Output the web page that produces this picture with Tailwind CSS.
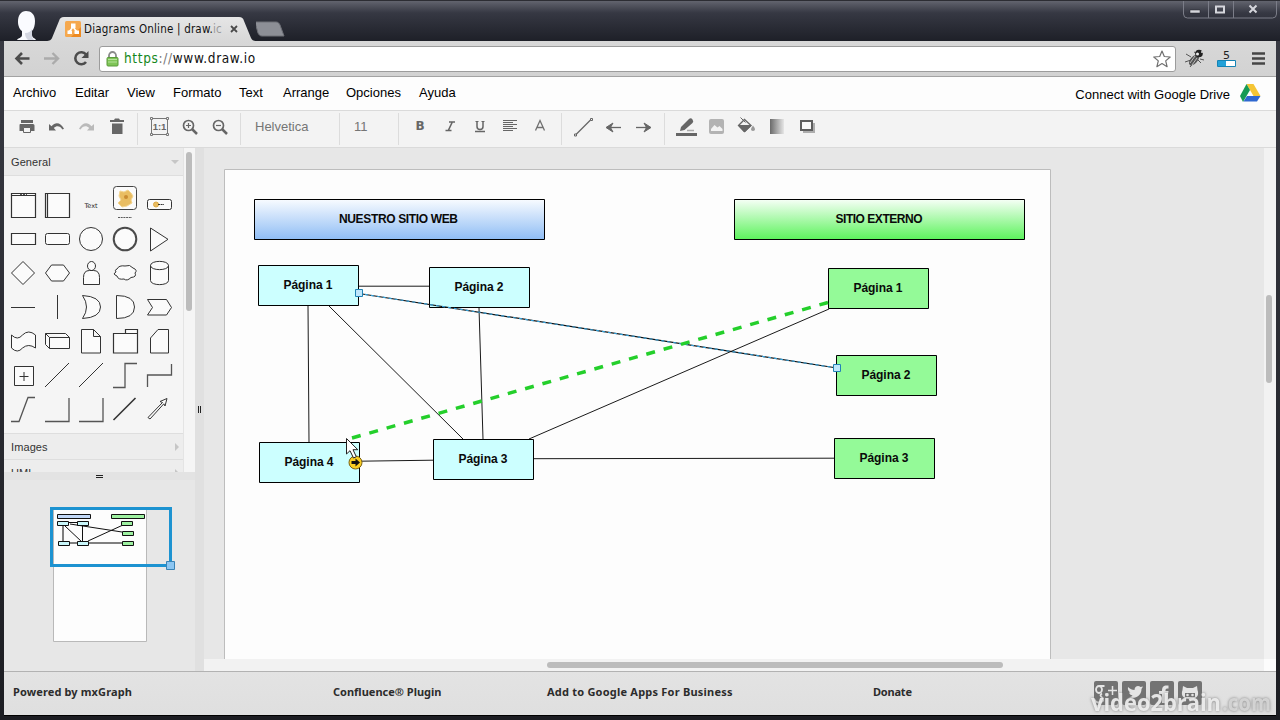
<!DOCTYPE html>
<html lang="es">
<head>
<meta charset="utf-8">
<title>Diagrams Online | draw.io</title>
<script src="https://cdn.jsdelivr.net/npm/@tailwindcss/browser@4"></script>
</head>
<body class="w-[1280px] h-[720px] overflow-hidden bg-[#24252b] font-['Liberation_Sans',sans-serif] text-black">
<div class="flex flex-col w-[1280px] h-[720px] bg-linear-to-b from-[#3a3c45] to-[#1c1d22]">

  <!-- Window title bar with tabs -->
  <header class="relative h-[41px] shrink-0 flex items-start bg-linear-to-b from-[#62646e] via-[#363843] via-30% to-[#1e2028] border-t border-[#2c2d33]">
    <svg class="shrink-0" width="50" height="40" viewBox="0 1 50 40"><path d="M17 40c1-2 5-2 5-5v-4c-2-1-4-5-4-9 0-7 3-11 8-11s9 3 9 10c0 4-1 8-3 10v4c0 3 3 3 4 5z" fill="#fafbff"/><path d="M25 33c4 0 6-2 7-4v6c0 2 1 4 2 5h-6c-2-2-3-4-3-7z" fill="#d4d7e2"/></svg>
    <div class="relative w-[206px] h-10 shrink-0">
      <svg class="absolute inset-0 overflow-visible" width="206" height="40" viewBox="50 1 206 40"><defs><linearGradient id="tab" x2="0" y2="1"><stop stop-color="#e6e6e6"/><stop offset="1" stop-color="#d8d8d8"/></linearGradient></defs><path d="M46 41c4 0 5-1 6-3l7-17c1-3 2-4 5-4h175c3 0 4 1 5 4l7 17c1 2 2 3 5 3z" fill="url(#tab)"/></svg>
      <div class="relative flex items-center h-[24px] mt-4 pl-[15px]">
        <svg width="16" height="16" viewBox="0 0 16 16"><rect width="16" height="16" rx="1.500" fill="#f5a84e"/><path d="M6 16 16 6v10z" fill="#ee8a20"/><path d="M8 4v3M8 6 4 11M8 6l4 5" stroke="#fff" stroke-width="1.500"/><path d="M6 2.500h4.500V7H6zM2.500 9.500H7V13H2.500zM9.500 9.500H14V13H9.500z" fill="#fff"/></svg>
        <span class="ml-[3px] w-[138px] overflow-hidden whitespace-nowrap font-['DejaVu_Sans_Condensed','DejaVu_Sans',sans-serif] [font-stretch:condensed] text-[11.500px] leading-4 tracking-[.2px] text-[#111]">Diagrams Online | draw.<span class="text-[#999]">ic</span></span>
        <svg class="ml-[7px]" width="10" height="10" viewBox="0 0 10 10"><path d="m2 2 6 6M8 2 2 8" stroke="#4a4a4a" stroke-width="1.800"/></svg>
      </div>
    </div>
    <svg class="shrink-0" width="32" height="40" viewBox="256 1 32 40"><path d="M255 22h21c2 0 3 1 4 3l4 11h-22c-2 0-3-1-4-3z" fill="#8d8f96" stroke="#6e7077"/></svg>
    <svg class="ml-auto mr-[3px] shrink-0" width="95" height="40" viewBox="1182 1 95 40"><path d="M1183.500 1v13q0 4 4 4h85q4 0 4-4V1M1208.500 1v17M1233.500 1v17" fill="none" stroke="#7b7d88"/><path d="M1190 10h10v3h-10z" fill="#d5d6dc" stroke="#25262d" stroke-width=".5"/><path d="M1216 6.500h8v6h-8z" fill="none" stroke="#d5d6dc" stroke-width="2"/><path d="m1249.500 5.500 7 7m0-7-7 7" stroke="#d5d6dc" stroke-width="2"/></svg>
  </header>

  <div class="flex flex-col mx-1 h-[675px] bg-white border-b border-black">
    <!-- Browser toolbar -->
    <div class="flex items-center h-9 shrink-0 bg-linear-to-b from-[#d8d8d8] to-[#d2d2d2] border-b border-[#a3a3a3]">
      <svg class="shrink-0" width="95" height="35" viewBox="4 41 95 35" fill="none"><path d="M29.500 58.500H17M22 53l-5.500 5.500L22 64" stroke="#4c4c4c" stroke-width="2.600"/><path d="M44 58.500h13M52.500 53l5.500 5.500-5.500 5.500" stroke="#ababab" stroke-width="2.400"/><path d="M86 62a6 6 0 1 1 0-7.500" stroke="#4c4c4c" stroke-width="2.600"/><path d="M88.500 51v7H81.500z" fill="#4c4c4c"/></svg>
      <div class="flex items-center w-[1077px] h-[26px] bg-white border border-[#9c9c9c] rounded-[3px] pl-[6px] pr-[4px]">
        <svg width="13" height="18" viewBox="0 0 13 18"><path d="M3 9V5.500a3.500 3.500 0 0 1 7 0V9" fill="none" stroke="#8b8b8b" stroke-width="1.800"/><rect x="1" y="7.500" width="11" height="8.500" rx="1" fill="#7fc557" stroke="#5b9a3b"/><path d="M2 9.500h9M2 12h9" stroke="#b5e29a"/></svg>
        <span class="ml-[5px] font-['DejaVu_Sans_Condensed','DejaVu_Sans',sans-serif] [font-stretch:condensed] text-[13.500px] tracking-[.65px] text-[#111] whitespace-nowrap"><span class="text-[#16881c]">https</span><span class="text-[#777]">://</span>www.draw.io</span>
        <svg class="ml-auto" width="18" height="18" viewBox="0 0 18 18"><path d="m9 1 2.300 5.500 5.900.5-4.500 3.900 1.400 5.800L9 13.600l-5.100 3.100 1.400-5.800L.8 7l5.900-.5z" fill="#fff" stroke="#707070" stroke-width="1.200" stroke-linejoin="round"/></svg>
      </div>
      <svg class="shrink-0" width="98" height="35" viewBox="1176 41 98 35"><path d="M1186 54l5 3m-6 5 6-2m-1 7 4-5m4-8-4-2m10 8-4-1m1 4-3-3" stroke="#555" fill="none"/><ellipse cx="1194" cy="60" rx="6.500" ry="3.500" transform="rotate(-48 1194 60)" fill="#555"/><path d="m1190 63 5-7m-3 9 5-7" stroke="#bbb"/><circle cx="1199" cy="53.500" r="3.800" fill="#222"/><circle cx="1197.500" cy="54" r="1.500" fill="#eee"/><circle cx="1202" cy="52" r="1" fill="#ddd"/><text x="1226.500" y="58.500" font-size="11" text-anchor="middle" font-family="DejaVu Sans" fill="#222">5</text><path d="M1217.500 60.500h18v6h-18z" fill="#fff" stroke="#1583b4"/><path d="M1218 61h8v5h-8z" fill="#22a1d8"/><path d="M1252 53.500h13M1252 58.500h13M1252 63.500h13" stroke="#454545" stroke-width="2.600"/></svg>
    </div>

    <!-- Application menu -->
    <nav class="flex items-center h-[33px] shrink-0 bg-[#fdfdfd] pl-[9px] pb-[2px] text-[13px] leading-4 whitespace-nowrap">
      <span class="w-[62px]">Archivo</span><span class="w-[52px]">Editar</span><span class="w-[46px]">View</span><span class="w-[66px]">Formato</span><span class="w-11">Text</span><span class="w-[63px]">Arrange</span><span class="w-[73px]">Opciones</span><span>Ayuda</span>
      <span class="ml-auto mt-1">Connect with Google Drive</span>
      <svg class="ml-[9px] mr-[15px] mt-px" width="22" height="20" viewBox="1239 84 22 20"><path d="M1246.500 85h7l7 12h-7z" fill="#f5c535"/><path d="m1246.500 85 3.500 6-7 12-3-6z" fill="#169a55"/><path d="m1247 97h13.500l-3.500 5.500h-13.500z" fill="#2f68d0"/></svg>
    </nav>

    <!-- Icon toolbar -->
    <div class="flex items-center h-[38px] shrink-0 bg-[#f3f3f3] border-y border-[#dadada] pl-2 text-[13px] text-[#757575]">
      <svg width="30" height="36" viewBox="12 111 30 36"><path d="M21 120h12v3H21zM20 124h13q1.500 0 1.500 1.500V131H31v-3h-8v3h-3.500v-5.500Q19.500 124 20 124z" fill="#666"/><path d="M23.500 127.500h7v5h-7z" fill="#f3f3f3" stroke="#666"/></svg>
      <svg width="30" height="36" viewBox="42 111 30 36"><path d="M49 124v6.500h7l-2.200-2.500c3-3 6.500-2 8.700 1.500l1.500-.8c-3-6-8.500-7.500-12.500-2.500z" fill="#666"/></svg>
      <svg width="30" height="36" viewBox="72 111 30 36"><path d="M94 124v6.500h-7l2.200-2.500c-3-3-6.500-2-8.700 1.500l-1.500-.8c3-6 8.500-7.500 12.500-2.500z" fill="#bababa"/></svg>
      <svg width="30" height="36" viewBox="102 111 30 36"><path d="M110 120h4l1-1.500h4l1 1.500h4v2h-14zM112 123.500h10.500V134H112z" fill="#666"/></svg>
      <i class="w-px h-8 bg-[#dcdcdc] ml-[5px] mr-[6px]"></i>
      <svg width="31" height="36" viewBox="144 111 31 36"><path d="M151.500 118.500h16v16h-16z" fill="none" stroke="#777"/><path d="M150.500 117.500h2v2h-2zM166.500 117.500h2v2h-2zM150.500 133.500h2v2h-2zM166.500 133.500h2v2h-2z" fill="#f3f3f3" stroke="#777"/><text x="159.500" y="130" font-size="9.500" font-weight="700" text-anchor="middle" font-family="Liberation Sans" fill="#666">1:1</text></svg>
      <svg width="30" height="36" viewBox="175 111 30 36" fill="none" stroke="#666"><circle cx="188.500" cy="125.500" r="5" stroke-width="1.700"/><path d="m192 129 5 5" stroke-width="2.500"/><path d="M186 125.500h5M188.500 123v5" stroke-width="1.200"/></svg>
      <svg width="30" height="36" viewBox="205 111 30 36" fill="none" stroke="#666"><circle cx="218.500" cy="125.500" r="5" stroke-width="1.700"/><path d="m222 129 5 5" stroke-width="2.500"/><path d="M216 125.500h5" stroke-width="1.200"/></svg>
      <i class="w-px h-8 bg-[#dcdcdc] ml-[5px] mr-[14px]"></i>
      <span class="w-[84px] -mt-[4px]">Helvetica</span>
      <i class="w-px h-8 bg-[#dcdcdc] mr-[14px]"></i>
      <span class="w-11 -mt-[4px]">11</span>
      <i class="w-px h-8 bg-[#dcdcdc] mr-[6px]"></i>
      <svg width="30" height="36" viewBox="405 111 30 36"><text x="420" y="130" font-size="12" font-weight="700" text-anchor="middle" font-family="DejaVu Sans" fill="#666">B</text></svg>
      <svg width="30" height="36" viewBox="435 111 30 36"><path d="M449 122h6M445.500 130.500h6M452.300 122l-4 8.500" stroke="#666" stroke-width="1.600"/></svg>
      <svg width="30" height="36" viewBox="465 111 30 36"><path d="M477 121v5.500c0 4 6 4 6 0V121M475 131.500h10" fill="none" stroke="#666" stroke-width="1.500"/><path d="M475.500 121.500h3M481.500 121.500h3" stroke="#666"/></svg>
      <svg width="30" height="36" viewBox="495 111 30 36"><path d="M503 120.500h14M503 122.500h10M503 124.500h14M503 126.500h10M503 128.500h14M503 130.500h10" stroke="#666"/></svg>
      <svg width="30" height="36" viewBox="525 111 30 36"><path d="m535.500 130.500 4.500-10 4.500 10M537 127.500h6" fill="none" stroke="#707070" stroke-width="1.300"/></svg>
      <i class="w-px h-8 bg-[#dcdcdc] ml-[6px] mr-[6px]"></i>
      <svg width="30" height="36" viewBox="568 111 30 36"><path d="m576 134.500 15-15" stroke="#666" stroke-width="1.200"/><path d="M574.500 134h2v2h-2zM590.500 118.500h2v2h-2z" fill="#f3f3f3" stroke="#666"/></svg>
      <svg width="30" height="36" viewBox="598 111 30 36"><path d="M621 127.500h-14" stroke="#666" stroke-width="1.300"/><path d="m613 123-7 4.500 7 4.500-2.500-4.500z" fill="#666" stroke="#666"/></svg>
      <svg width="30" height="36" viewBox="628 111 30 36"><path d="M636 127.500h14" stroke="#666" stroke-width="1.300"/><path d="m644 123 7 4.500-7 4.500 2.500-4.500z" fill="#666" stroke="#666"/></svg>
      <i class="w-px h-8 bg-[#dcdcdc] ml-[6px] mr-[6px]"></i>
      <svg width="30" height="36" viewBox="671 111 30 36"><path d="M676 133h21v3h-21zM680 131l1-4 8-8q2-1.500 3.500.5t0 3.500l-8 7z" fill="#666"/><path d="M687 130.500h7" stroke="#aaa" stroke-width="1.500"/></svg>
      <svg width="30" height="36" viewBox="701 111 30 36"><rect x="709" y="119" width="15" height="15" rx="2" fill="#b3b3b3"/><path d="m711 131v-2l3.500-4 3 2.500 2-1.500 3 3v2z" fill="#f3f3f3"/></svg>
      <svg width="30" height="36" viewBox="731 111 30 36"><path d="m738.500 125.500 6-6 6.500 6-6.500 6z" fill="#f3f3f3" stroke="#666" stroke-width="1.300"/><path d="M738.500 125.500h12.500l-6.500 6.500zM740.500 117.500l5 5" fill="#666" stroke="#666"/><path d="M753 125.500q4 5 0 5.500-4-.5 0-5.500z" fill="#999"/></svg>
      <svg width="30" height="36" viewBox="761 111 30 36"><defs><linearGradient id="gr"><stop stop-color="#6a6a6a"/><stop offset="1" stop-color="#e6e6e6"/></linearGradient></defs><path d="M770 119h14v15h-14z" fill="url(#gr)"/></svg>
      <svg width="30" height="36" viewBox="791 111 30 36"><path d="M803 123h12v10h-12z" fill="#adadad"/><path d="M801 121h11v9h-11z" fill="#f8f8f8" stroke="#5e5e5e" stroke-width="2"/></svg>
    </div>

    <main class="flex h-[523px] shrink-0 bg-[#e7e7e7]">
      <!-- Shape palette -->
      <aside class="flex flex-col w-[191px] shrink-0">
        <div class="flex h-[324px] overflow-hidden bg-[#f5f5f5]">
          <div class="w-[180px] border-r border-[#e4e4e4] text-[11px] leading-4 text-[#333]">
            <div class="flex items-center justify-between h-7 pl-[7px] pr-[4px] bg-[#ebebeb] border-b border-[#dedede] tracking-[.1px]">General<i class="border-x-4 border-x-transparent border-t-4 border-t-[#c6c6c6]"></i></div>
            <div class="grid grid-cols-[repeat(5,34px)] auto-rows-[34px] pl-[2px] pt-3 h-[257px] *:w-[34px] *:h-[34px] *:fill-[#fbfbfb] *:stroke-[#333]">
              <svg viewBox="0 0 34 34"><path d="M5.500 5.500h24v24h-24zM5.500 7.500h24" stroke-width="1.200"/><path d="M14 6.700h7" stroke-dasharray="2 1"/></svg>
              <svg viewBox="0 0 34 34"><path d="M5.500 5.500h24v24h-24zM7.500 5.500v24" stroke-width="1.200"/></svg>
              <svg viewBox="0 0 34 34"><text x="17" y="19.500" text-anchor="middle" font-size="6.500" stroke="none" fill="#222" font-family="DejaVu Sans">Text</text></svg>
              <svg viewBox="0 0 34 34" class="overflow-visible"><rect x="5.500" y="-1.500" width="23" height="23" rx="3" stroke="#444"/><path d="m12 3 4 1 4-2 3 3 2 3-2 4 1 3-5 3-5 1-4-4 3-3-2-4z" fill="#e9bd62" stroke="#f3d591"/><circle cx="18" cy="9" r="2" fill="#c98c32" stroke="none"/><path d="M10 29.500h14" stroke-dasharray="2 .7" stroke-width=".8"/></svg>
              <svg viewBox="0 0 34 34"><rect x="5.500" y="11.500" width="24" height="10" rx="2"/><circle cx="14" cy="16.500" r="2.500" fill="#e9bd62" stroke="#ddaa45"/><path d="M16 16.500h6" stroke-dasharray="2 .6"/></svg>

              <svg viewBox="0 0 34 34"><path d="M5.500 11.500h24v11h-24z" stroke-width="1.200"/></svg>
              <svg viewBox="0 0 34 34"><rect x="5.500" y="11.500" width="24" height="11" rx="2"/></svg>
              <svg viewBox="0 0 34 34"><circle cx="17" cy="17" r="11.500"/></svg>
              <svg viewBox="0 0 34 34"><circle cx="17" cy="17" r="11.300" stroke="#4a4a4a" stroke-width="2"/></svg>
              <svg viewBox="0 0 34 34"><path d="M8.500 6v23L26 17.300z"/></svg>

              <svg viewBox="0 0 34 34"><path d="M17 5.500 28.500 17 17 28.500 5.500 17z"/></svg>
              <svg viewBox="0 0 34 34"><path d="M5.500 17l6-8h12l6 8-6 8h-12z"/></svg>
              <svg viewBox="0 0 34 34"><ellipse cx="17.500" cy="10" rx="4" ry="4.500"/><path d="M9.500 28.500v-7q0-7 6-7h4q6 0 6 7v7z"/></svg>
              <svg viewBox="0 0 34 34"><path d="M9 13q2-4 8-3 5-2 8 2 5 2 2 5 2 4-4 4.500-4 4-7 1.500-6 1-7-3-5-2-1-4-2-2 1-3z"/></svg>
              <svg viewBox="0 0 34 34"><path d="M8.500 9.500v15c0 5.500 18 5.500 18 0v-15c0-5.500-18-5.500-18 0zc0 5.500 18 5.500 18 0"/></svg>

              <svg viewBox="0 0 34 34"><path d="M5 17.500h24"/></svg>
              <svg viewBox="0 0 34 34"><path d="M17.500 5v24"/></svg>
              <svg viewBox="0 0 34 34"><path d="M8.500 5.500q18 1 18 11.500t-18 11.500q8-11.500 0-23z"/></svg>
              <svg viewBox="0 0 34 34"><path d="M8.500 5.500q18 0 18 11.500t-18 11.500z"/></svg>
              <svg viewBox="0 0 34 34"><path d="M5.500 9.500h19l5 8-5 7.500h-19l5-7.500z"/></svg>

              <svg viewBox="0 0 34 34"><path d="M5.500 11q6 6 11 0 6-6 13 0v13q-7-5-13 0-5 6-11 0z"/></svg>
              <svg viewBox="0 0 34 34"><path d="M5.500 9.500h20l4 4v11h-20l-4-4zM5.500 9.500l4 4h20M9.500 13.500v11"/></svg>
              <svg viewBox="0 0 34 34"><path d="M7.500 5.500h12l7 7v16.500h-19zM19.500 5.500v7h7"/></svg>
              <svg viewBox="0 0 34 34"><path d="M5.500 9.500h12v-4h12v23.500h-24zM17.500 9.500h12" stroke-width="1.200"/></svg>
              <svg viewBox="0 0 34 34"><path d="M16 5.500h10.500V29h-18V14z"/></svg>

              <svg viewBox="0 0 34 34"><path d="M8.500 8.500h19v19h-19zM18 14v9M13.500 18.500h9"/></svg>
              <svg viewBox="0 0 34 34"><path d="m5 29 24-24"/></svg>
              <svg viewBox="0 0 34 34"><path d="m5 29 24-24"/></svg>
              <svg viewBox="0 0 34 34" class="fill-none!"><path d="M5 29.500h12V5.500h12" stroke="#555" stroke-width="1.300"/></svg>
              <svg viewBox="0 0 34 34" class="fill-none!"><path d="M5.500 29V17h24V6" stroke="#555" stroke-width="1.300"/></svg>

              <svg viewBox="0 0 34 34" class="fill-none!"><path d="M5 29.500h8L22 5.500h7" stroke="#555" stroke-width="1.300"/></svg>
              <svg viewBox="0 0 34 34" class="fill-none!"><path d="M5 29.500h24V6" stroke="#555" stroke-width="1.300"/></svg>
              <svg viewBox="0 0 34 34" class="fill-none!"><path d="M5 29.500h24V6" stroke="#555" stroke-width="1.300"/></svg>
              <svg viewBox="0 0 34 34"><path d="M5.500 28 27.500 6" stroke-width="1.600"/></svg>
              <svg viewBox="0 0 34 34"><path d="m6 25.500 14.500-15-2.500-1 7-3-2 7.500-1.200-2.200L8 27z"/></svg>
            </div>
            <div class="flex items-center justify-between h-[27px] pl-[7px] pr-[4px] bg-[#ededed] border-y border-[#dedede] tracking-[.1px]">Images<i class="border-y-4 border-y-transparent border-l-4 border-l-[#c6c6c6]"></i></div>
            <div class="flex items-center justify-between h-[26px] pl-[7px] pr-[4px] bg-[#ededed] tracking-[.1px]">UML<i class="border-y-4 border-y-transparent border-l-4 border-l-[#c6c6c6]"></i></div>
          </div>
          <div class="grow pl-[2px] pt-1"><div class="w-[6px] h-[159px] rounded-full bg-[#bcbcbc]"></div></div>
        </div>
        <div class="flex flex-col items-center justify-center gap-px h-2 bg-[#e3e3e3]"><i class="w-[7px] h-px bg-[#222]"></i><i class="w-[7px] h-px bg-[#222]"></i></div>
        <!-- Outline -->
        <svg width="191" height="191" viewBox="4 480 191 191"><path d="M53.500 509.500h93v132h-93z" fill="#fdfdfd" stroke="#b9b9b9"/><g stroke="#111" fill="none"><path d="M68 522.500h10M65 526l17 16M82.500 526v16M70 524l52 8M88 541l35-16"/><path d="M63 526v16M69 543h14M88 543h35" stroke-width="1.500" stroke="#555"/></g><g fill="#c9f7fb" stroke="#111"><path d="M57.500 514.500h33v4h-33z" fill="#c3d9f8"/><path d="M57.500 521.500h11v4h-11zM77.500 521.500h11v4h-11zM58.500 541.500h11v4h-11zM77.500 541.500h11v4h-11z"/></g><path d="M111.500 514.500h33v4h-33zM121.500 521.500h11v4h-11zM122.500 531.500h11v4h-11zM122.500 541.500h11v4h-11z" fill="#9df0a0" stroke="#111"/><path d="M51.500 508.500h119v57h-119z" fill="none" stroke="#1d93d1" stroke-width="3"/><path d="M166.500 561.500h8v8h-8z" fill="#8cc6f2" stroke="#3a83b5"/></svg>
      </aside>

      <div class="flex items-center justify-center gap-px w-[9px] h-full shrink-0 bg-[#e0e0e0]"><i class="w-px h-[7px] bg-[#222]"></i><i class="w-px h-[7px] bg-[#222]"></i></div>

      <!-- Diagram canvas -->
      <section class="grow flex flex-col">
        <div class="flex h-[511px]">
          <svg width="1060" height="511" viewBox="204 148 1060 511" font-family="Liberation Sans, sans-serif" font-size="12" font-weight="700" text-anchor="middle">
            <defs>
              <linearGradient id="bl" x2="0" y2="1"><stop stop-color="#f8fbff"/><stop offset="1" stop-color="#8fbdf5"/></linearGradient>
              <linearGradient id="gn" x2="0" y2="1"><stop stop-color="#f6fff6"/><stop offset="1" stop-color="#5cf35c"/></linearGradient>
            </defs>
            <path d="M224.500 169.500h826V662h-826z" fill="#fdfdfd" stroke="#bdbdbd"/>
            <g stroke="#1a1a1a" fill="none">
              <path d="M359 286.200h70M308 306l1 136M329 306l134 133M479 308l4 131M360 461.200l73-1M534 458.700l300-.5M529 439l300-130"/>
            </g>
            <g stroke="#000">
              <path d="M254.500 199.500h290v40h-290z" fill="url(#bl)"/>
              <path d="M734.500 199.500h290v40h-290z" fill="url(#gn)"/>
              <path d="M258.500 265.500h100v40h-100zM429.500 267.500h100v40h-100zM259.500 442.500h100v40h-100zM433.500 439.500h100v40h-100z" fill="#ccffff"/>
              <path d="M828.500 268.500h100v40h-100zM836.500 355.500h100v40h-100zM834.500 438.500h100v40h-100z" fill="#94fa98"/>
            </g>
            <path d="M359 293.500 837 368" stroke="#111" stroke-width="1.200"/>
            <path d="M359 293.500 837 368" stroke="#35a0d8" stroke-width="1.200" stroke-dasharray="3 3"/>
            <path d="M352 438 828 302.500" stroke="#24cf2b" stroke-width="3.500" stroke-dasharray="9 9"/>
            <path d="M355.500 289.500h7v7h-7zM833.500 364.500h7v7h-7z" fill="#bfe6fb" stroke="#2183b5"/>
            <g fill="#0a0a0a">
              <text x="398.500" y="222.500" textLength="119">NUESTRO SITIO WEB</text>
              <text x="879" y="222.500" textLength="87">SITIO EXTERNO</text>
              <text x="308" y="289" textLength="49">Página 1</text>
              <text x="479" y="291" textLength="49">Página 2</text>
              <text x="309" y="466" textLength="49">Página 4</text>
              <text x="483" y="463" textLength="49">Página 3</text>
              <text x="878" y="292" textLength="49">Página 1</text>
              <text x="886" y="379" textLength="49">Página 2</text>
              <text x="884" y="462" textLength="49">Página 3</text>
            </g>
            <circle cx="355.500" cy="462.500" r="6.500" fill="#f9cd22" stroke="#7d6312"/>
            <path d="M351.500 461h4v-2.500l4.500 4-4.500 4V464h-4z" fill="#111"/>
            <path d="M346.500 438.500v15.500l3.500-3.300 3.500 7.300 2.800-1.300-3.300-7h4.800z" fill="#fff" stroke="#222"/>
          </svg>
          <div class="w-2 grow bg-[#f2f2f2] pl-[2px] pt-[147px]"><div class="w-[6px] h-[88px] rounded-full bg-[#bcbcbc]"></div></div>
        </div>
        <div class="flex h-3 bg-[#f2f2f2]"><div class="mt-[3px] ml-[343px] w-[456px] h-[6px] rounded-full bg-[#bcbcbc]"></div><div class="ml-auto w-3 bg-[#fcfcfc]"></div></div>
      </section>
    </main>

    <!-- Footer -->
    <footer class="relative flex grow bg-linear-to-b from-[#e3e3e3] to-[#dfdfdf] border-t border-[#b2b2b2] pl-[9px] pt-3 font-['Noto_Sans',sans-serif] font-bold text-[11px] leading-4 text-[#2c2c2c] whitespace-nowrap">
      <span class="w-[320px] tracking-[.12px]">Powered by mxGraph</span><span class="w-[214px]">Confluence® Plugin</span><span class="w-[326px] tracking-[.22px]">Add to Google Apps For Business</span><span class="w-[221px] -tracking-[.2px]">Donate</span>
      <svg class="-mt-[3px]" width="110" height="24" viewBox="1094 681 110 24"><g fill="#737373"><rect x="1094" y="681" width="24" height="24" rx="2"/><rect x="1122" y="681" width="24" height="24" rx="2"/><rect x="1150" y="681" width="24" height="24" rx="2"/><rect x="1178" y="681" width="24" height="24" rx="2"/></g><g fill="none" stroke="#e5e5e5" stroke-width="1.800"><ellipse cx="1099" cy="689.500" rx="3" ry="3.500"/><path d="M1099 686h5.500M1102 693.500c-3 2-1 3 1 5 1 3-2 4-4 4s-4-1-4-3"/></g><path d="M1112.500 686v9M1108 690.500h9" stroke="#e5e5e5" stroke-width="1.500"/><path d="M1128 687c2 2 4 3 6.500 3 0-4 4-5 6-3l2.500-.5-1.500 2.500c0 7-7 11-13 8 2 0 3-.5 4-1.500-2-.5-3-1.500-3.500-3h1.500c-2-1-3-3-2.500-5.500z" fill="#e5e5e5"/><path d="M1162 703v-9h-3v-3h3c0-5 2-6 6.500-5.500v3c-3-.3-3 .5-3 2.500h3l-.5 3h-2.500v9z" fill="#e5e5e5"/><path d="M1183 686l4 2h6l4-2 .5 4c2 6-1 9-7.500 9s-9.500-3-7.500-9z" fill="#e5e5e5"/><path d="M1185 693h10v4h-10z" fill="#737373"/><circle cx="1187.500" cy="695" r="1.300" fill="#e5e5e5"/><circle cx="1192.500" cy="695" r="1.300" fill="#e5e5e5"/></svg>
      <svg class="absolute left-[1080px] top-[12px]" width="192" height="32" viewBox="1084 684 192 32"><text y="711" font-family="Open Sans, sans-serif" font-size="23" fill="#f2f2f2" fill-opacity=".9" style="filter:drop-shadow(0 0 1.500px #777)"><tspan x="1091" font-weight="700" textLength="130" lengthAdjust="spacingAndGlyphs">video2brain</tspan><tspan x="1222" fill="#d8d8d8" textLength="49" lengthAdjust="spacingAndGlyphs">.com</tspan></text></svg>
    </footer>
  </div>
</div>
</body>
</html>
